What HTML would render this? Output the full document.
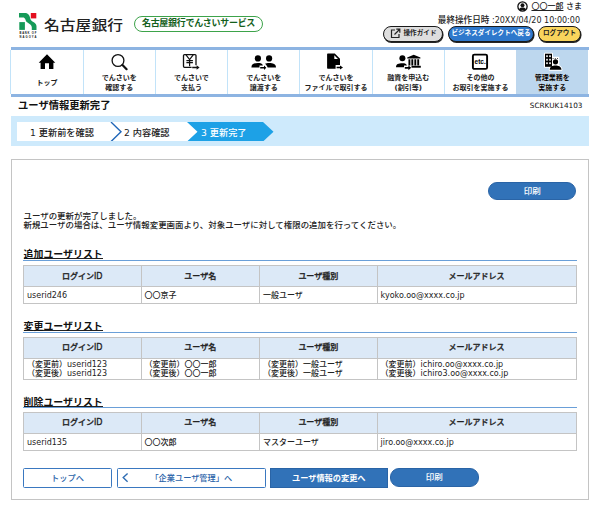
<!DOCTYPE html>
<html lang="ja">
<head>
<meta charset="utf-8">
<title>ユーザ情報更新完了</title>
<style>
*{box-sizing:border-box;margin:0;padding:0}
html,body{width:600px;height:506px;overflow:hidden;background:#fff}
body{font-family:"DejaVu Sans","Liberation Sans","Noto Sans CJK JP",sans-serif;color:#222;position:relative;font-size:8px;font-weight:500}
.abs{position:absolute;white-space:nowrap}
/* header */
#bankname{left:44px;top:13px;font-size:13.5px;line-height:24px;color:#222;letter-spacing:0;font-weight:500;transform:scaleX(1.17);transform-origin:0 0}
#pill{left:134px;top:16.4px;width:129px;height:15.5px;border:1.3px solid #3da34a;border-radius:8px;color:#14601c;font-weight:700;font-size:9px;line-height:13px;text-align:center;letter-spacing:-0.3px}
#user{right:18px;top:1.4px;font-size:8px;line-height:11px;color:#222}
#lastop{right:20px;top:14.2px;font-size:8px;line-height:12px;color:#222}
.hbtn{top:26.2px;height:16.3px;border:1.5px solid #1a1a1a;border-radius:8.2px;font-size:6.6px;font-weight:700;line-height:13.3px;text-align:center;box-shadow:.6px 1px .6px rgba(0,0,0,.85)}
#b1{left:383px;width:60px;background:#dedede;color:#222;padding-left:14px}
#b2{left:448px;width:86px;background:#2e78cc;color:#fff}
#b3{left:538px;width:43px;background:#f9d45c;color:#222}
/* nav */
#nav{left:11px;top:47px;width:578px;height:49.5px;border-top:3px solid #8db4e2;border-bottom:3px solid #8db4e2;background:#fff}
.nc{position:absolute;top:0;height:43.5px;margin-left:-.7px;border-left:1.4px solid #c2e3f9;text-align:center;font-size:7px;line-height:10px;color:#222;padding-top:22.5px;font-weight:700}
.nc.one{padding-top:27.5px}
.nc.act{background:#bdd7ee;color:#000;text-shadow:0 0 1px #fff}
/* title */
#title{left:18px;top:98px;font-size:10.3px;line-height:14px;font-weight:700;color:#111}
#scr{right:17.5px;top:100.5px;font-size:7.3px;line-height:10px;color:#111}
/* steps */
#steps{left:11px;top:116.2px;width:578px;height:30px;background:#ceeafc}
.step{position:absolute;top:5.4px;height:19.6px;background:#fff;font-size:9.2px;line-height:21px;color:#222}
/* panel */
#panel{left:11px;top:159px;width:577.8px;height:341px;border:1px solid #c4c4c4;background:#fff}
.pbtn{border-radius:9px;background:#3172b8;color:#fff;font-size:8.5px;font-weight:500;text-align:center;border:1px solid #2a64a6}
.msg{left:23.5px;font-size:8.45px;line-height:9px;color:#222}
.sh{left:23.5px;font-size:9.95px;line-height:15px;height:12px;font-weight:700;color:#111;border-bottom:1px solid #222}
.sl{left:23px;width:553.5px;height:1.1px;background:#6a9fd8}
table{position:absolute;left:23px;width:553.5px;border-collapse:collapse;table-layout:fixed;font-size:8px}
th,td{border:1px solid #c4c4c4;height:17px;padding:3px 3px 0;vertical-align:middle;line-height:8.6px;white-space:nowrap}
th{background:#dce9f7;font-weight:500;-webkit-text-stroke:.3px #222;text-align:center;color:#222;height:20.7px;padding-top:1.5px}
td{text-align:left;color:#222}
tr.ml td{height:21px;line-height:9px;padding-top:1px}
.fb{top:468px;height:19.5px;font-size:8.2px;line-height:18px;text-align:center}
.wbtn{border:1px solid #3a78c0;border-radius:1.5px;background:#fff;color:#2a62a8;font-weight:500}
</style>
</head>
<body>
<!-- logo -->
<svg class="abs" style="left:0;top:0" width="60" height="45" viewBox="0 0 60 45">
  <path d="M19 13 H26.1 C28.5 13.5 29.5 15.5 30 17.5 C30.5 20 31.5 21 34.2 22.5 C36 23.7 36.5 25 36.5 26.5 V29.9 H31.8 V27.5 C31.8 25.5 30 24 27.5 22.5 C25.8 21.4 25.6 20 25.2 19 C24.8 18 24 17.4 23 17.4 H19 Z" fill="#169a58"/>
  <rect x="19.3" y="22.1" width="5.6" height="7.8" fill="#169a58"/>
  <rect x="30.8" y="13" width="5.5" height="5.4" fill="#e3101f"/>
  <text transform="translate(19.4 34) scale(.1)" font-family="Liberation Sans, sans-serif" font-size="27" font-weight="700" fill="#111" textLength="170" lengthAdjust="spacing">BANK OF</text>
  <text transform="translate(19.4 37.6) scale(.1)" font-family="Liberation Sans, sans-serif" font-size="27" font-weight="700" fill="#111" textLength="170" lengthAdjust="spacing">NAGOYA</text>
</svg>
<div class="abs" id="bankname">名古屋銀行</div>
<div class="abs" id="pill">名古屋銀行でんさいサービス</div>

<div class="abs" id="user"><svg width="11" height="11" viewBox="0 0 10 10" style="vertical-align:-3px;margin-right:3px"><circle cx="5" cy="5" r="4.2" fill="#fff" stroke="#111" stroke-width="1.2"/><circle cx="5" cy="3.9" r="1.8" fill="#111"/><path d="M1.9 8.3 C2.1 6.2 3.4 5.9 5 5.9 C6.6 5.9 7.9 6.2 8.1 8.3 Z" fill="#111"/></svg><span style="text-decoration:underline">〇〇一郎</span> さま</div>
<div class="abs" id="lastop"><span style="font-size:8.6px">最終操作日時</span> :20XX/04/20 10:00:00</div>
<div class="abs hbtn" id="b1"><svg width="11" height="11" viewBox="0 0 11 11" style="position:absolute;left:5.5px;top:1.2px"><path d="M5 2 H1.5 V9.5 H9 V6" fill="none" stroke="#222" stroke-width="1.2"/><path d="M4.5 6.5 L9.5 1.5 M6.3 1.2 H9.8 V4.7" fill="none" stroke="#222" stroke-width="1.2"/></svg>操作ガイド</div>
<div class="abs hbtn" id="b2">ビジネスダイレクトへ戻る</div>
<div class="abs hbtn" id="b3">ログアウト</div>

<!-- nav -->
<div class="abs" id="nav">
  <div class="nc one" style="left:0;width:72.25px">トップ</div>
  <div class="nc" style="left:72.25px;width:72.25px">でんさいを<br>確認する</div>
  <div class="nc" style="left:144.5px;width:72.25px">でんさいで<br>支払う</div>
  <div class="nc" style="left:216.75px;width:72.25px">でんさいを<br>譲渡する</div>
  <div class="nc" style="left:289px;width:72.25px">でんさいを<br>ファイルで取引する</div>
  <div class="nc" style="left:361.25px;width:72.25px">融資を申込む<br>(割引等)</div>
  <div class="nc" style="left:433.5px;width:72.25px">その他の<br>お取引を実施する</div>
  <div class="nc act" style="left:505.75px;width:72.25px;border-left:none">管理業務を<br>実施する</div>
</div>
<svg class="abs" style="left:0;top:50px" width="600" height="22" viewBox="0 50 600 22">
  <!-- home -->
  <path d="M47 54.2 L55.3 62.7 H53.4 V69 H49 V63.3 H45 V69 H40.6 V62.7 H38.7 Z" fill="#000"/>
  <!-- search -->
  <circle cx="118" cy="60.5" r="5.9" fill="none" stroke="#111" stroke-width="1.3"/>
  <path d="M122.5 65 L126.6 69.2" stroke="#111" stroke-width="2.2" stroke-linecap="round"/>
  <!-- pay -->
  <g transform="translate(178,50)" fill="none" stroke="#111">
    <rect x="5.5" y="4.6" width="12.5" height="12.7" rx="1" stroke-width="1.3"/>
    <path d="M8 4.8 L11.6 9.6 L15.2 4.8 M11.6 9.6 V16.3 M8.4 10.6 H14.9 M8.4 12.6 H14.9" stroke-width="1.2"/>
    <rect x="13.6" y="15.2" width="8.5" height="5" fill="#fff" stroke="none"/>
    <path d="M14.2 16.7 H18.6 V15.3 L21.6 17.5 L18.6 19.7 V18.3 H14.2 Z" fill="#111" stroke="none"/>
  </g>
  <!-- transfer -->
  <g transform="translate(250,50)" fill="#000">
    <circle cx="7.9" cy="8.4" r="3.1"/>
    <path d="M1.4 17.6 C1.4 14 4 13 7.9 13 C10.5 13 12.5 13.6 12.9 15.5 H9.5 V17.6 Z"/>
    <circle cx="19.1" cy="8.4" r="3.1"/>
    <path d="M15 13.8 C16 13.2 17.5 13 19.1 13 C23 13 26 14 26 17.6 H17.7 C17.2 16 16.2 14.8 15 13.8Z"/>
    <path d="M10.2 17 H14 V15.6 L16.3 17.8 L14 20 V18.6 H10.2 Z"/>
  </g>
  <!-- file -->
  <g transform="translate(322,50)">
    <path d="M5.8 3.5 H12.8 L18 8.7 V15 H13.6 V18.7 H5.8 a.7 .7 0 0 1 -.7 -.7 V4.2 a.7 .7 0 0 1 .7 -.7Z" fill="#000"/>
    <path d="M12.3 5.2 V8.9 H16 Z" fill="#fff"/>
    <path d="M14.6 16.7 H18 V15.4 L21 17.5 L18 19.6 V18.3 H14.6 Z" fill="#000"/>
  </g>
  <!-- loan -->
  <g transform="translate(392,50)" fill="#000">
    <circle cx="10.4" cy="8.3" r="3"/>
    <path d="M4 17.3 C4 14 6.5 13.2 10.4 13.2 C13 13.2 14.5 13.8 14.9 15.4 H12 V17.3 Z"/>
    <path d="M12.8 16.9 H16.4 V15.4 L19.2 17.8 L16.4 20.2 V18.7 H12.8Z"/>
    <path d="M21.7 4.8 L28.4 7.4 V8.6 H15.2 V7.4 Z"/>
    <path d="M17.4 9.2 V15.4 M20.3 9.2 V15.4 M23.3 9.2 V15.4 M26.2 9.2 V15.4" stroke="#000" stroke-width="1.9"/>
    <rect x="19.5" y="15.8" width="9.3" height="1.9"/>
  </g>
  <!-- etc -->
  <g transform="translate(466,50)">
    <rect x="6.9" y="4.6" width="14.2" height="14.3" rx="1.5" fill="#fff" stroke="#000" stroke-width="1.9"/>
    <text x="14.2" y="14" text-anchor="middle" font-family="Liberation Sans, sans-serif" font-size="6.5" font-weight="700" fill="#000">etc.</text>
  </g>
  <!-- admin -->
  <g transform="translate(538,50)">
    <g fill="#fff" stroke="#fff" stroke-width="2" stroke-linejoin="round">
      <rect x="7" y="3.7" width="7" height="13.1"/>
      <rect x="14.2" y="7.7" width="6.1" height="7.7"/>
      <path d="M11.7 19.7 C12 16.5 14.5 15.6 17.5 15.6 C20.5 15.6 23 16.5 23.5 19.7 Z"/>
    </g>
    <rect x="7" y="3.7" width="7" height="13.1" fill="#000"/>
    <g fill="#fff"><rect x="8.2" y="5.3" width="1.6" height="1.8"/><rect x="11.2" y="5.3" width="1.6" height="1.8"/><rect x="8.2" y="8.8" width="1.6" height="1.8"/><rect x="11.2" y="8.8" width="1.6" height="1.8"/><rect x="8.2" y="12.3" width="1.6" height="1.8"/><rect x="11.2" y="12.3" width="1.6" height="1.8"/></g>
    <rect x="14.2" y="7.7" width="6.1" height="7.7" fill="#fff"/>
    <path d="M14.6 8.5 H20" stroke="#000" stroke-width=".7" stroke-dasharray="1 1.2"/>
    <circle cx="17.5" cy="11.8" r="2.6" fill="#000"/>
    <path d="M11.7 19.7 C12 16.5 14.5 15.6 17.5 15.6 C20.5 15.6 23 16.5 23.5 19.7 Z" fill="#000"/>
  </g>
</svg>

<div class="abs" id="title">ユーザ情報更新完了</div>
<div class="abs" id="scr">SCRKUK14103</div>

<!-- steps -->
<div class="abs" id="steps">
  <div class="step" style="left:6px;width:181px;padding-left:13px">1 更新前を確認</div>
  <svg class="abs" style="left:99px;top:5.4px" width="14" height="19.6" viewBox="0 0 14 19.5"><path d="M1 0 L11 9.75 L1 19.5" fill="none" stroke="#1f66b8" stroke-width="1.4"/></svg>
  <div class="step" style="left:109px;width:60px;padding-left:4px;background:none">2 内容確認</div>
  <svg class="abs" style="left:176px;top:5.4px" width="88" height="19.6" viewBox="0 0 88 19.5"><path d="M0 0 H76 L86.5 9.75 L76 19.5 H0 L10.5 9.75 Z" fill="#1da1e6"/></svg>
  <div class="step" style="left:190px;background:none;color:#fff">3 更新完了</div>
</div>

<!-- panel -->
<div class="abs" id="panel"></div>
<div class="abs pbtn" style="left:488px;top:182px;width:88.3px;height:17.7px;line-height:16px">印刷</div>
<div class="abs msg" style="top:212px">ユーザの更新が完了しました。</div>
<div class="abs msg" style="top:220.6px">新規ユーザの場合は、ユーザ情報変更画面より、対象ユーザに対して権限の追加を行ってください。</div>

<div class="abs sh" style="top:247px">追加ユーザリスト</div>
<div class="abs sl" style="top:259.6px"></div>
<table style="top:265.3px">
<colgroup><col style="width:117.5px"><col style="width:118.5px"><col style="width:117.6px"><col></colgroup>
<tr><th>ログインID</th><th>ユーザ名</th><th>ユーザ種別</th><th>メールアドレス</th></tr>
<tr><td>userid246</td><td>〇〇京子</td><td>一般ユーザ</td><td>kyoko.oo@xxxx.co.jp</td></tr>
</table>

<div class="abs sh" style="top:319px">変更ユーザリスト</div>
<div class="abs sl" style="top:331.6px"></div>
<table style="top:337px">
<colgroup><col style="width:117.5px"><col style="width:118.5px"><col style="width:117.6px"><col></colgroup>
<tr><th>ログインID</th><th>ユーザ名</th><th>ユーザ種別</th><th>メールアドレス</th></tr>
<tr class="ml"><td>（変更前）userid123<br>（変更後）userid123</td><td>（変更前）〇〇一郎<br>（変更後）〇〇一郎</td><td>（変更前）一般ユーザ<br>（変更後）一般ユーザ</td><td>（変更前）ichiro.oo@xxxx.co.jp<br>（変更後）ichiro3.oo@xxxx.co.jp</td></tr>
</table>

<div class="abs sh" style="top:394.5px">削除ユーザリスト</div>
<div class="abs sl" style="top:407px"></div>
<table style="top:412.2px">
<colgroup><col style="width:117.5px"><col style="width:118.5px"><col style="width:117.6px"><col></colgroup>
<tr><th>ログインID</th><th>ユーザ名</th><th>ユーザ種別</th><th>メールアドレス</th></tr>
<tr><td>userid135</td><td>〇〇次郎</td><td>マスターユーザ</td><td>jiro.oo@xxxx.co.jp</td></tr>
</table>

<div class="abs fb wbtn" style="left:23px;width:89px">トップへ</div>
<div class="abs fb wbtn" style="left:117px;width:148.5px">「企業ユーザ管理」へ</div>
<svg class="abs" style="left:120px;top:470px" width="12" height="15" viewBox="120 470 12 15"><path d="M127.6 473.4 L123.2 477.6 L127.6 481.8" fill="none" stroke="#2f6db3" stroke-width="1.4"/></svg>
<div class="abs fb" style="left:270px;width:117.5px;background:#3172b8;color:#fff;font-weight:700;border:1px solid #2a64a6">ユーザ情報の変更へ</div>
<div class="abs pbtn" style="left:390px;top:468px;width:88.5px;height:18.5px;line-height:17.5px">印刷</div>
</body>
</html>
